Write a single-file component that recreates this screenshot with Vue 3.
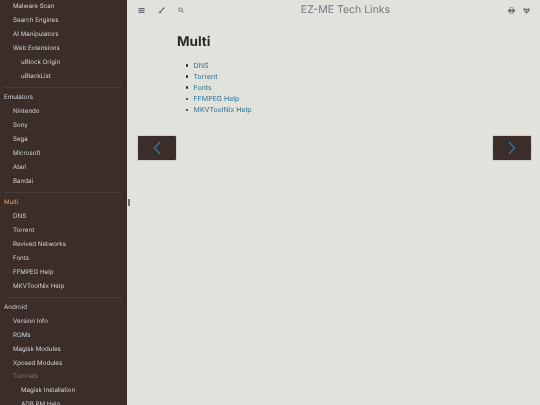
<script setup>
const rows = [
  { t: 'Malware Scan', l: 1 },
  { t: 'Search Engines', l: 1 },
  { t: 'AI Manipulators', l: 1 },
  { t: 'Web Extensions', l: 1 },
  { t: 'uBlock Origin', l: 2 },
  { t: 'uBlackList', l: 2 },
  { sep: true },
  { t: 'Emulators', l: 0 },
  { t: 'Nintendo', l: 1 },
  { t: 'Sony', l: 1 },
  { t: 'Sega', l: 1 },
  { t: 'Microsoft', l: 1 },
  { t: 'Atari', l: 1 },
  { t: 'Bandai', l: 1 },
  { sep: true },
  { t: 'Multi', l: 0, active: true },
  { t: 'DNS', l: 1 },
  { t: 'Torrent', l: 1 },
  { t: 'Revived Networks', l: 1 },
  { t: 'Fonts', l: 1 },
  { t: 'FFMPEG Help', l: 1 },
  { t: 'MKVToolNix Help', l: 1 },
  { sep: true },
  { t: 'Android', l: 0 },
  { t: 'Version Info', l: 1 },
  { t: 'ROMs', l: 1 },
  { t: 'Magisk Modules', l: 1 },
  { t: 'Xposed Modules', l: 1 },
  { t: 'Tutorials', l: 1, dim: true },
  { t: 'Magisk Installation', l: 2 },
  { t: 'ADB PM Help', l: 2 }
]
const links = ['DNS', 'Torrent', 'Fonts', 'FFMPEG Help', 'MKVToolNix Help']
</script>

<template>
  <div class="page">
    <aside class="sidebar">
      <ul class="toc">
        <template v-for="(r, i) in rows" :key="i">
          <li v-if="r.sep" class="sep"></li>
          <li v-else class="row" :class="['lv' + r.l, { active: r.active, dim: r.dim }]">{{ r.t }}</li>
        </template>
      </ul>
    </aside>
    <div class="handle"></div>
    <main class="main">
      <header class="bar">
        <div class="tools">
          <svg class="ic" viewBox="0 0 16 16"><path d="M1 2.500h14v2.400H1zM1 6.800h14v2.400H1zM1 11.100h14v2.400H1z" /></svg>
          <svg class="ic" viewBox="0 0 16 16"><path d="M14.600 1c-.6-.5-1.400-.4-2 .1L6.500 7.300l2.200 2.200 6-6.200c.5-.6.5-1.600-.1-2.300zM5.600 8.300C3.600 8.500 3.400 10 3.200 11.600 3 12.800 2.200 13.500 1 14c2.500 1 6.800.9 7.300-3.300z" /></svg>
          <svg class="ic small" viewBox="0 0 16 16"><path fill-rule="evenodd" d="M6.800 1a5.800 5.800 0 0 1 4.700 9.200l3.500 3.500-1.400 1.400-3.500-3.500A5.800 5.800 0 1 1 6.800 1zm0 2.200a3.600 3.600 0 1 0 0 7.200 3.600 3.600 0 0 0 0-7.200z" /></svg>
        </div>
        <h2 class="title">EZ-ME Tech Links</h2>
        <div class="tools right">
          <svg class="ic" viewBox="0 0 16 16"><path fill-rule="evenodd" d="M4 1h8v4h2.500c.5 0 1 .5 1 1v5.500h-3V15h-9v-3.500h-3V6c0-.5.500-1 1-1H4zm1.500 1.500V6h5V2.500zm0 7.500v3.500h5V10z" /></svg>
          <svg class="ic mask" viewBox="0 0 16 16"><path fill-rule="evenodd" d="M1.500 1.500 4.800 4h6.400l3.300-2.500c.6 2 .8 4.200.4 6.200-.4 2.200-1.800 3.600-3.700 4.200L10 15H6l-.7-3.100C3.400 11.300 2 9.900 1.600 7.700c-.4-2-.7-4.200-.1-6.200zM5.600 6.800a1.200 1.600 0 1 0 0 3.200 1.200 1.600 0 0 0 0-3.200zm4.800 0a1.200 1.600 0 1 0 0 3.200 1.200 1.600 0 0 0 0-3.200z" /></svg>
        </div>
      </header>
      <article class="content">
        <h1 class="heading">Multi</h1>
        <ul class="links">
          <li v-for="l in links" :key="l"><a class="link">{{ l }}</a></li>
        </ul>
      </article>
      <nav class="pager">
        <a class="btn"><svg viewBox="0 0 8 14" class="chev"><path d="M7 1 1.500 7 7 13" /></svg></a>
        <a class="btn"><svg viewBox="0 0 8 14" class="chev"><path d="M1 1l5.500 6L1 13" /></svg></a>
      </nav>
    </main>
  </div>
</template>

<style scoped>
.page {
  display: flex;
  width: 540px;
  height: 405px;
  overflow: hidden;
  background: #e1e2dc;
  font-family: Inter, "Liberation Sans", sans-serif;
  text-rendering: geometricPrecision;
  position: relative;
}
.sidebar {
  flex: 0 0 127px;
  height: 405px;
  overflow: hidden;
  background: #3b2e2a;
}
.toc {
  list-style: none;
  margin: 0.300px 0 0;
  padding: 0 4px;
  font-size: 6.200px;
  line-height: 13.900px;
  filter: blur(0.3px);
}
.row {
  white-space: nowrap;
  color: #d2cfd1;
}
.lv1 { padding-left: 9px; }
.lv2 { padding-left: 17px; }
.active { color: #e69f67; }
.dim { color: #7b7370; }
.sep {
  height: 1px;
  margin: 3.500px 0 3px;
  background: #4a3d38;
}
.handle {
  position: absolute;
  left: 128px;
  top: 199px;
  width: 2px;
  height: 7px;
  background: #6c6f75;
}
.main {
  flex: 1;
  display: flex;
  flex-direction: column;
  min-width: 0;
}
.bar {
  height: 20px;
  display: flex;
  align-items: center;
  padding: 0 9px 0 11px;
  filter: blur(0.3px);
}
.tools {
  display: flex;
  align-items: center;
  gap: 13px;
  width: 45px;
}
.tools.right {
  gap: 7.500px;
  width: 23px;
}
.ic {
  flex: none;
  width: 7px;
  height: 7px;
  fill: #66686e;
}
.ic.small {
  width: 6px;
  height: 6px;
}
.ic.mask {
  fill: #75777c;
}
.title {
  flex: 1;
  margin: 0;
  text-align: center;
  font-size: 10.500px;
  line-height: 20px;
  font-weight: 400;
  color: #76777f;
}
.content {
  padding: 0 0 0 50px;
  filter: blur(0.3px);
}
.heading {
  margin: 13px 0 0;
  font-size: 13.500px;
  line-height: 18px;
  font-weight: 700;
  color: #2b2a2a;
}
.links {
  list-style: none;
  margin: 9px 0 0;
  padding: 0 0 0 8.500px;
  font-size: 7px;
  line-height: 11.100px;
}
.links li {
  display: flex;
  align-items: center;
  gap: 5.500px;
}
.links li::before {
  content: "";
  flex: none;
  width: 2.600px;
  height: 2.600px;
  border-radius: 50%;
  background: #262625;
}
.link { color: #2b6f96; }
.pager {
  display: flex;
  justify-content: space-between;
  padding: 0 8px 0 10px;
  margin-top: 19.500px;
}
.btn {
  width: 40px;
  height: 26px;
  box-sizing: border-box;
  border-radius: 2px;
  background: #3b2e2a;
  border: 1px solid #d0d0cb;
  display: flex;
  align-items: center;
  justify-content: center;
  filter: blur(0.3px);
}
.chev {
  width: 8px;
  height: 14px;
  fill: none;
  stroke: #2f6f96;
  stroke-width: 1.600;
}
</style>
